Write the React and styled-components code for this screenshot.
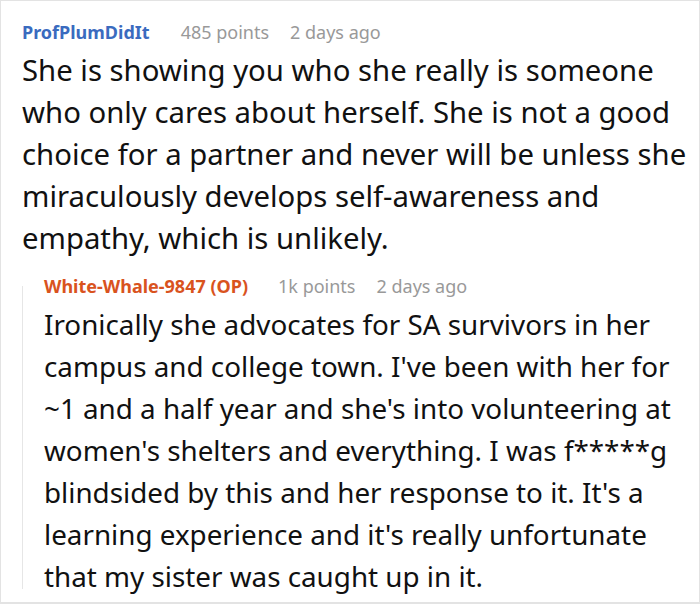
import React from 'react';
import styled, { createGlobalStyle } from 'styled-components';

const GlobalStyle = createGlobalStyle`
  html, body {
    margin: 0;
    padding: 0;
    background: #fff;
  }
  body {
    font-family: "Noto Sans", "Open Sans", sans-serif;
  }
`;

const Frame = styled.div`
  box-sizing: border-box;
  width: 700px;
  height: 604px;
  border: 1px solid #e3e3e3;
  border-bottom-width: 2px;
  padding: 18px 10px 0 21px;
  overflow: hidden;
`;

const Comment = styled.div``;

const Header = styled.div`
  display: flex;
  align-items: baseline;
  font-size: 18px;
  line-height: 26px;
  height: 26px;
  white-space: nowrap;
`;

const Author = styled.span`
  font-weight: 700;
  color: ${(p) => (p.$op ? '#d9531e' : '#3a6bbf')};
  margin-right: ${(p) => (p.$op ? '30px' : '31px')};
`;

const Meta = styled.span`
  color: #999;
  margin-right: 21px;
`;

const Body = styled.p`
  margin: 4px 0 0;
  font-size: ${(p) => p.$size || '29.3px'};
  line-height: 42px;
  color: #111;
`;

const Line = styled.span`
  display: block;
  white-space: nowrap;
`;

const Replies = styled.div`
  position: relative;
  margin-top: 14px;
  padding-left: 22px;

  &::before {
    content: '';
    position: absolute;
    left: 0;
    top: 13px;
    bottom: 8px;
    width: 1px;
    background: #e6e6e6;
  }
`;

const reply = [
  'Ironically she advocates for SA survivors in her',
  "campus and college town. I've been with her for",
  "~1 and a half year and she's into volunteering at",
  "women's shelters and everything. I was f*****g",
  "blindsided by this and her response to it. It's a",
  "learning experience and it's really unfortunate",
  'that my sister was caught up in it.',
];

export default function App() {
  return (
    <>
      <GlobalStyle />
      <Frame>
        <Comment>
          <Header>
            <Author>ProfPlumDidIt</Author>
            <Meta>485 points</Meta>
            <Meta>2 days ago</Meta>
          </Header>
          <Body>
            She is showing you who she really is someone who only cares about herself. She is not a good
            choice for a partner and never will be unless she miraculously develops self-awareness and
            empathy, which is unlikely.
          </Body>
          <Replies>
            <Comment>
              <Header>
                <Author $op>White-Whale-9847 (OP)</Author>
                <Meta>1k points</Meta>
                <Meta>2 days ago</Meta>
              </Header>
              <Body $size="27.8px">
                {reply.map((l) => (
                  <Line key={l}>{l}</Line>
                ))}
              </Body>
            </Comment>
          </Replies>
        </Comment>
      </Frame>
    </>
  );
}
